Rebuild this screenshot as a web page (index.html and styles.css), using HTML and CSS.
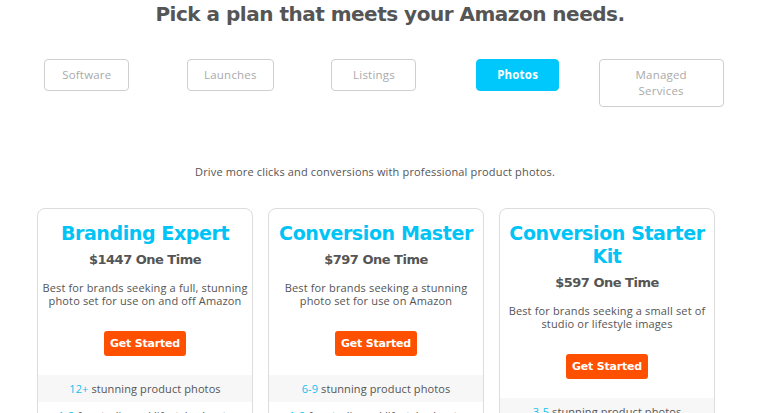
FILE: index.html
```html
<!DOCTYPE html>
<html>
<head>
<meta charset="utf-8">
<link rel="stylesheet" href="styles.css">
</head>
<body>
<h1 class="title">Pick a plan that meets your Amazon needs.</h1>
<div class="wrap">
  <nav class="tabs">
    <div class="cell"><span class="tab">Software</span></div>
    <div class="cell"><span class="tab launches">Launches</span></div>
    <div class="cell"><span class="tab">Listings</span></div>
    <div class="cell"><span class="tab active">Photos</span></div>
    <div class="cell"><span class="tab wide">Managed Services</span></div>
  </nav>
  <p class="lead">Drive more clicks and conversions with professional product photos.</p>
  <div class="cards">
    <div class="card">
      <div class="head">
        <h2 class="name">Branding Expert</h2>
        <div class="price">$1447 One Time</div>
        <p class="desc">Best for brands seeking a full, stunning photo set for use on and off Amazon</p>
        <a class="btn">Get Started</a>
      </div>
      <div class="row shade"><span class="num">12+</span> stunning product photos</div>
      <div class="row"><span class="num">1-2</span> for studio and lifestyle shoots</div>
    </div>
    <div class="card">
      <div class="head">
        <h2 class="name">Conversion Master</h2>
        <div class="price">$797 One Time</div>
        <p class="desc">Best for brands seeking a stunning photo set for use on Amazon</p>
        <a class="btn">Get Started</a>
      </div>
      <div class="row shade"><span class="num">6-9</span> stunning product photos</div>
      <div class="row"><span class="num">1-2</span> for studio and lifestyle shoots</div>
    </div>
    <div class="card">
      <div class="head">
        <h2 class="name">Conversion Starter Kit</h2>
        <div class="price">$597 One Time</div>
        <p class="desc">Best for brands seeking a small set of studio or lifestyle images</p>
        <a class="btn">Get Started</a>
      </div>
      <div class="row shade"><span class="num">3-5</span> stunning product photos</div>
      <div class="row"><span class="num">1</span> studio or lifestyle shoot</div>
    </div>
  </div>
</div>
</body>
</html>
```
FILE: styles.css
```css
html, body {
  margin: 0;
  padding: 0;
  background: #fff;
  overflow: hidden;
}
body {
  font-family: "Open Sans", "Liberation Sans", sans-serif;
  color: #666;
}
.title {
  margin: 0;
  padding-top: 1px;
  text-align: center;
  font-family: "DejaVu Sans", sans-serif;
  font-weight: 700;
  font-size: 20px;
  line-height: 26px;
  color: #555;
  letter-spacing: -0.5px;
}
.wrap {
  width: 750px;
}
.tabs {
  display: grid;
  grid-template-columns: repeat(5, 1fr);
  padding: 0 17px 0 15px;
  margin-top: 32px;
  align-items: start;
}
.cell {
  display: flex;
  justify-content: center;
}
.tab {
  display: block;
  box-sizing: border-box;
  border: 1px solid #cfcfcf;
  border-radius: 4px;
  padding: 7px 0;
  font-size: 11.5px;
  line-height: 16px;
  color: #aaa;
  text-align: center;
  width: 85px;
  letter-spacing: 0.2px;
}
.tab.launches {
  width: 87px;
}
.tab.active {
  background: #00c8fc;
  border-color: #00c8fc;
  color: #fff;
  font-weight: 700;
  width: 83px;
}
.tab.wide {
  width: 125px;
  padding: 7px 30px;
}
.lead {
  margin: 58px 0 0;
  text-align: center;
  font-size: 11px;
  line-height: 14px;
  color: #555;
  letter-spacing: 0.15px;
}
.cards {
  display: flex;
  gap: 15px;
  padding: 0 36px 0 37px;
  margin-top: 29px;
  align-items: flex-start;
}
.card {
  flex: 0 0 216px;
  box-sizing: border-box;
  border: 1px solid #dcdcdc;
  border-radius: 8px;
  overflow: hidden;
}
.head {
  padding: 13px 3px 19px;
  text-align: center;
}
.name {
  margin: 0;
  font-family: "DejaVu Sans", sans-serif;
  font-weight: 700;
  font-size: 19px;
  line-height: 23px;
  color: #00c3f6;
  letter-spacing: -0.4px;
}
.price {
  margin-top: 6px;
  font-family: "DejaVu Sans", sans-serif;
  font-weight: 700;
  font-size: 13px;
  line-height: 18px;
  color: #555;
  letter-spacing: -0.5px;
}
.desc {
  margin: 12px 0 0;
  font-size: 11px;
  line-height: 13px;
  color: #555;
  letter-spacing: 0.15px;
}
.btn {
  display: block;
  margin: 24px auto 0;
  background: #ff5000;
  color: #fff;
  border-radius: 3px;
  font-family: "DejaVu Sans", sans-serif;
  font-weight: 700;
  font-size: 11px;
  line-height: 25px;
  width: 82px;
  letter-spacing: -0.2px;
}
.row {
  text-align: center;
  font-size: 11px;
  line-height: 27px;
  color: #555;
  letter-spacing: 0.1px;
}
.row.shade {
  background: #f7f7f7;
}
.num {
  color: #10c0f0;
}
```
